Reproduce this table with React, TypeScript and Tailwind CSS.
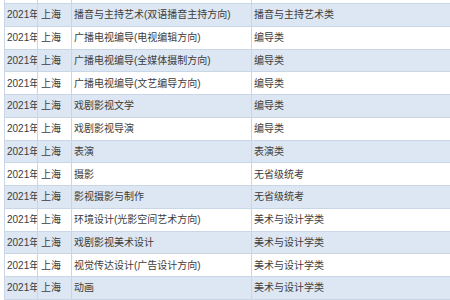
const rows = [
  ["播音与主持艺术(双语播音主持方向)", "播音与主持艺术类"],
  ["广播电视编导(电视编辑方向)", "编导类"],
  ["广播电视编导(全媒体摄制方向)", "编导类"],
  ["广播电视编导(文艺编导方向)", "编导类"],
  ["戏剧影视文学", "编导类"],
  ["戏剧影视导演", "编导类"],
  ["表演", "表演类"],
  ["摄影", "无省级统考"],
  ["影视摄影与制作", "无省级统考"],
  ["环境设计(光影空间艺术方向)", "美术与设计学类"],
  ["戏剧影视美术设计", "美术与设计学类"],
  ["视觉传达设计(广告设计方向)", "美术与设计学类"],
  ["动画", "美术与设计学类"],
]

const cell = "flex items-center border-r border-[#c9d6e5] pl-[2px] whitespace-nowrap overflow-hidden"

export default function App() {
  return (
    <div
      className="w-[450px] h-[300px] overflow-hidden bg-white text-[10px] text-[#3c3c3c]"
      style={{ fontFamily: '"Liberation Sans", "Noto Sans CJK SC", sans-serif' }}
    >
      <div className="ml-[4px] -mt-[18.75px] border-l border-[#c9d6e5]">
        {/* cut-off row above the visible area */}
        <div className="grid grid-cols-[33px_34px_180px_1fr] h-[22.75px] border-b border-[#c9d6e5] bg-white">
          <div className={cell}></div>
          <div className={cell}></div>
          <div className={cell}></div>
          <div className={cell + " border-r-0"}></div>
        </div>
        {rows.map(([major, cat], i) => (
          <div
            key={major}
            className={
              "grid grid-cols-[33px_34px_180px_1fr] h-[22.75px] border-b border-[#c9d6e5] " +
              (i % 2 === 0 ? "bg-[#dce7f3]" : "bg-white")
            }
          >
            <div className={cell}>2021年</div>
            <div className={cell + " pl-[3px]"}>上海</div>
            <div className={cell}>{major}</div>
            <div className={cell + " border-r-0"}>{cat}</div>
          </div>
        ))}
      </div>
    </div>
  )
}
